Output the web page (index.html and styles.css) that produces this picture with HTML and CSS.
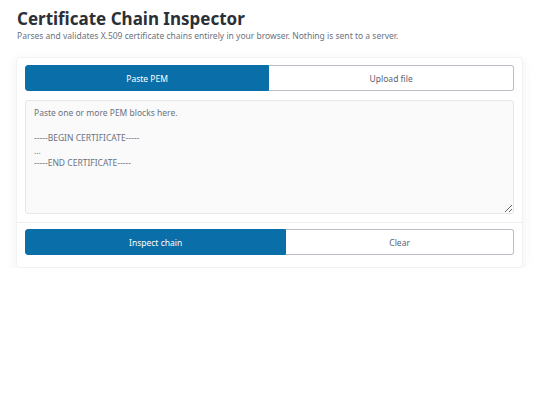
FILE: index.html
```html
<!DOCTYPE html>
<html>
	<head>
		<meta charset="UTF-8">
		<title>Certificate Chain Inspector</title>
		<link rel="stylesheet" href="styles.css">
	</head>
	<body>
		<div class="page">
			<h1 class="title">Certificate Chain Inspector</h1>
			<p class="lead">Parses and validates X.509 certificate chains entirely in your browser. Nothing is sent to a server.</p>

			<div class="card">
				<div class="card-body">
					<div class="segmented">
						<button class="seg active">Paste PEM</button>
						<button class="seg">Upload file</button>
					</div>
					<textarea class="pem" placeholder="Paste one or more PEM blocks here.

-----BEGIN CERTIFICATE-----
...
-----END CERTIFICATE-----"></textarea>
				</div>
				<div class="card-foot">
					<div class="segmented">
						<button class="seg active">Inspect chain</button>
						<button class="seg">Clear</button>
					</div>
				</div>
			</div>
		</div>
	</body>
</html>
```

FILE: styles.css
```css
*{
	margin: 0;
	padding: 0;
	box-sizing: border-box;
}
body{
	background: #ffffff;
	font-family: "Noto Sans", "Open Sans", sans-serif;
	color: #2b3036;
}
.page{
	padding: 8px 17px 0 17px;
}
.title{
	font-size: 17px;
	font-weight: 700;
	line-height: 22px;
	color: #2b3036;
}
.lead{
	font-size: 8.5px;
	line-height: 12px;
	color: #6b7280;
}

/* card */
.card{
	margin: 15px 0 0 -1px;
	width: 507px;
	background: #ffffff;
	border: 1px solid #f1f2f4;
	border-radius: 4px;
	box-shadow: 0 3px 12px rgba(30, 40, 60, 0.07);
}
.card-body{
	padding: 7px 8px 8px 8px;
}
.card-foot{
	border-top: 1px solid #eceef1;
	padding: 6px 8px 12px 8px;
}

/* segmented buttons */
.segmented{
	display: flex;
}
.seg{
	flex: 1 1 auto;
	height: 26px;
	padding: 0 12px;
	font-family: inherit;
	font-size: 8.5px;
	color: #5b6270;
	background: #ffffff;
	border: 1px solid #b9bdc5;
	border-left: none;
	cursor: pointer;
}
.seg:first-child{
	border-left: 1px solid #b9bdc5;
	border-radius: 3px 0 0 3px;
}
.seg:last-child{
	border-radius: 0 3px 3px 0;
}
.seg.active{
	background: #0a6fa9;
	border-color: #0a6fa9;
	color: #ffffff;
}

.pem{
	display: block;
	width: 100%;
	height: 114px;
	margin-top: 9px;
	padding: 6px 8px;
	font-family: inherit;
	font-size: 8.5px;
	line-height: 12.5px;
	color: #2b3036;
	background: #fafafb;
	border: 1px solid #e5e7eb;
	border-radius: 3px;
	resize: vertical;
}
.pem::placeholder{
	color: #6b7280;
	opacity: 1;
}
```
